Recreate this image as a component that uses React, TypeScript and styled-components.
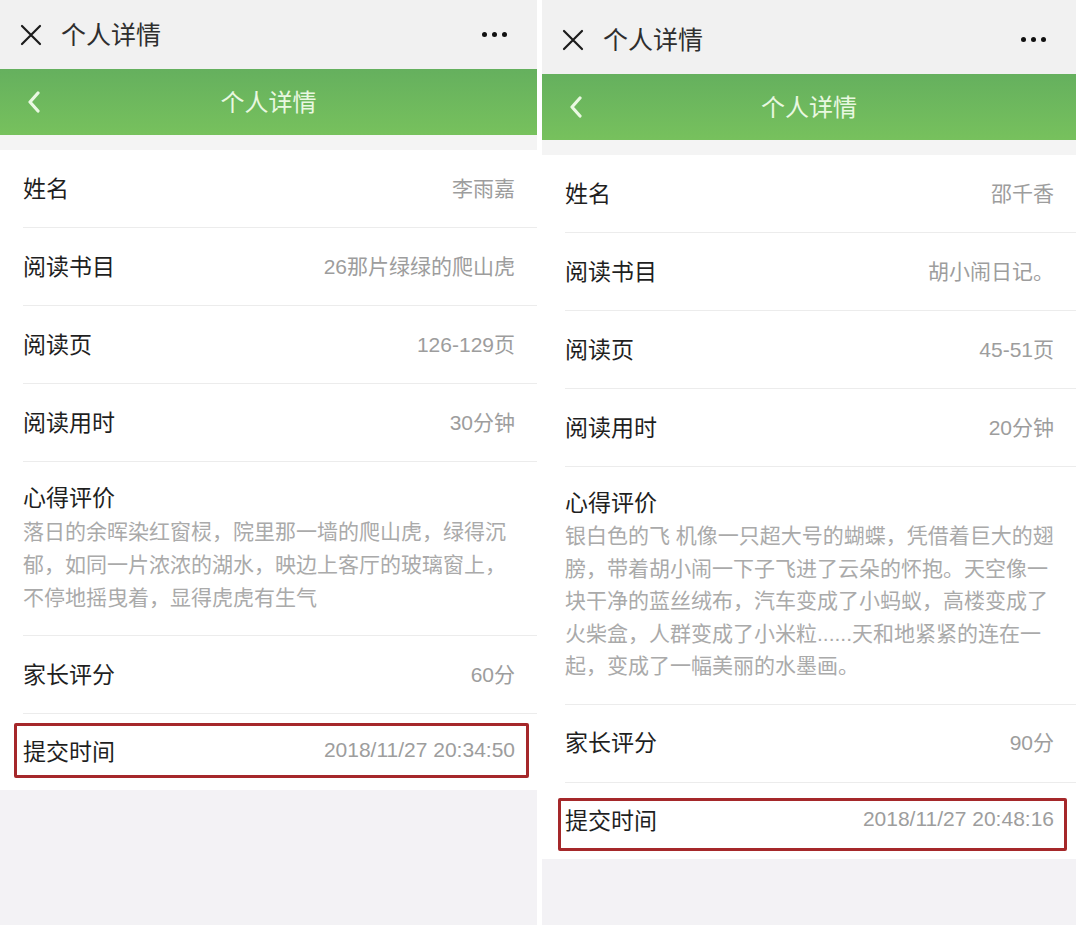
import React from 'react'
import styled, { createGlobalStyle } from 'styled-components'

const GlobalStyle = createGlobalStyle`
  html, body {
    margin: 0;
    padding: 0;
    background: #ffffff;
  }
  body {
    font-family: "Liberation Sans", "Noto Sans CJK SC", sans-serif;
  }
`

type Field = { label: string, value: string }

type PanelData = {
  topHeight: number
  lineHeight: number
  fields: Field[]
  comment: string
  score: string
  submitted: string
  box: { top: number, bottom: number, left: number, right: number }
}

const panels: PanelData[] = [
  {
    topHeight: 69,
    lineHeight: 33,
    fields: [
      { label: '姓名', value: '李雨嘉' },
      { label: '阅读书目', value: '26那片绿绿的爬山虎' },
      { label: '阅读页', value: '126-129页' },
      { label: '阅读用时', value: '30分钟' },
    ],
    comment: '落日的余晖染红窗棂，院里那一墙的爬山虎，绿得沉郁，如同一片浓浓的湖水，映边上客厅的玻璃窗上，不停地摇曳着，显得虎虎有生气',
    score: '60分',
    submitted: '2018/11/27 20:34:50',
    box: { top: 9, bottom: 12, left: 14, right: 8 },
  },
  {
    topHeight: 74,
    lineHeight: 32.5,
    fields: [
      { label: '姓名', value: '邵千香' },
      { label: '阅读书目', value: '胡小闹日记。' },
      { label: '阅读页', value: '45-51页' },
      { label: '阅读用时', value: '20分钟' },
    ],
    comment: '银白色的飞 机像一只超大号的蝴蝶，凭借着巨大的翅膀，带着胡小闹一下子飞进了云朵的怀抱。天空像一块干净的蓝丝绒布，汽车变成了小蚂蚁，高楼变成了火柴盒，人群变成了小米粒......天和地紧紧的连在一起，变成了一幅美丽的水墨画。',
    score: '90分',
    submitted: '2018/11/27 20:48:16',
    box: { top: 15, bottom: 8, left: 16, right: 9 },
  },
]

const Page = styled.div`
  display: flex;
  gap: 5px;
  width: 1080px;
  height: 932px;
  padding-right: 4px;
  box-sizing: border-box;
  overflow: hidden;
`
const Phone = styled.div<{ $w: number }>`
  width: ${props => props.$w}px;
  height: 925px;
  display: flex;
  flex-direction: column;
  background: #f3f2f5;
`
const TitleBar = styled.div<{ $h: number }>`
  height: ${props => props.$h}px;
  flex: none;
  display: flex;
  align-items: center;
  padding: ${props => props.$h - 69}px 30px 0 20px;
  box-sizing: border-box;
  background: #f1f1f1;
`
const TitleText = styled.div`
  margin-left: 19px;
  padding-bottom: 3px;
  font-size: 25px;
  color: #2e2e2e;
`
const More = styled.div`
  margin-left: auto;
  display: flex;
  gap: 5px;
`
const Dot = styled.span`
  width: 5px;
  height: 5px;
  border-radius: 50%;
  background: #111;
`
const NavBar = styled.div`
  height: 66px;
  flex: none;
  display: grid;
  grid-template-columns: 70px 1fr 70px;
  align-items: center;
  background: linear-gradient(#65b05e, #77c15d);
`
const Back = styled.div`
  padding-left: 27px;
  display: flex;
  align-items: center;
`
const NavTitle = styled.div`
  text-align: center;
  padding-bottom: 3px;
  font-size: 24px;
  color: #e9f8e1;
`
const Gap = styled.div`
  height: 15px;
  flex: none;
  background: #f4f4f4;
`
const List = styled.div`
  background: #ffffff;
  flex: none;
`
const Row = styled.div<{ $h?: number, $last?: boolean }>`
  position: relative;
  height: ${props => props.$h || 78}px;
  margin-left: 23px;
  padding: 0 22px 4px 0;
  display: flex;
  align-items: center;
  justify-content: space-between;
  border-bottom: ${props => props.$last ? 'none' : '1px solid #ececec'};
  box-sizing: border-box;
`
const Label = styled.div`
  font-size: 23px;
  color: #1f1f1f;
`
const Value = styled.div`
  font-size: 21px;
  color: #9d9d9d;
`
const Block = styled.div`
  margin-left: 23px;
  padding: 22px 22px 21px 0;
  border-bottom: 1px solid #ececec;
`
const BlockLabel = styled(Label)`
  line-height: 28px;
`
const Body = styled.div<{ $lh: number }>`
  margin-top: 3px;
  font-size: 21px;
  line-height: ${props => props.$lh}px;
  color: #aaaaaa;
`
const Highlight = styled.div<{ $t: number, $b: number, $l: number, $r: number }>`
  position: absolute;
  top: ${props => props.$t}px;
  bottom: ${props => props.$b}px;
  left: ${props => props.$l - 23}px;
  right: ${props => props.$r}px;
  border: 3px solid #a5282a;
  border-radius: 2px;
  pointer-events: none;
`
const Filler = styled.div`
  flex: 1;
  background: #f3f2f5;
`

const CloseIcon = () => (
  <svg width="22" height="22" viewBox="0 0 22 22">
    <path d="M2 2 L20 20 M20 2 L2 20" stroke="#1c1c1c" strokeWidth="2.2" strokeLinecap="round" />
  </svg>
)

const BackIcon = () => (
  <svg width="14" height="22" viewBox="0 0 14 22">
    <polyline points="11,2 3,11 11,20" fill="none" stroke="#eaf8e2" strokeWidth="3.2" strokeLinecap="round" strokeLinejoin="round" />
  </svg>
)

const Detail = ({ data, width }: { data: PanelData, width: number }) => (
  <Phone $w={width}>
    <TitleBar $h={data.topHeight}>
      <CloseIcon />
      <TitleText>个人详情</TitleText>
      <More><Dot /><Dot /><Dot /></More>
    </TitleBar>
    <NavBar>
      <Back><BackIcon /></Back>
      <NavTitle>个人详情</NavTitle>
      <div />
    </NavBar>
    <Gap />
    <List>
      {data.fields.map(f => (
        <Row key={f.label}>
          <Label>{f.label}</Label>
          <Value>{f.value}</Value>
        </Row>
      ))}
      <Block>
        <BlockLabel>心得评价</BlockLabel>
        <Body $lh={data.lineHeight}>{data.comment}</Body>
      </Block>
      <Row>
        <Label>家长评分</Label>
        <Value>{data.score}</Value>
      </Row>
      <Row $h={76} $last>
        <Label>提交时间</Label>
        <Value>{data.submitted}</Value>
        <Highlight $t={data.box.top} $b={data.box.bottom} $l={data.box.left} $r={data.box.right} />
      </Row>
    </List>
    <Filler />
  </Phone>
)

const App = () => (
  <>
    <GlobalStyle />
    <Page>
      <Detail data={panels[0]} width={537} />
      <Detail data={panels[1]} width={534} />
    </Page>
  </>
)

export default App
